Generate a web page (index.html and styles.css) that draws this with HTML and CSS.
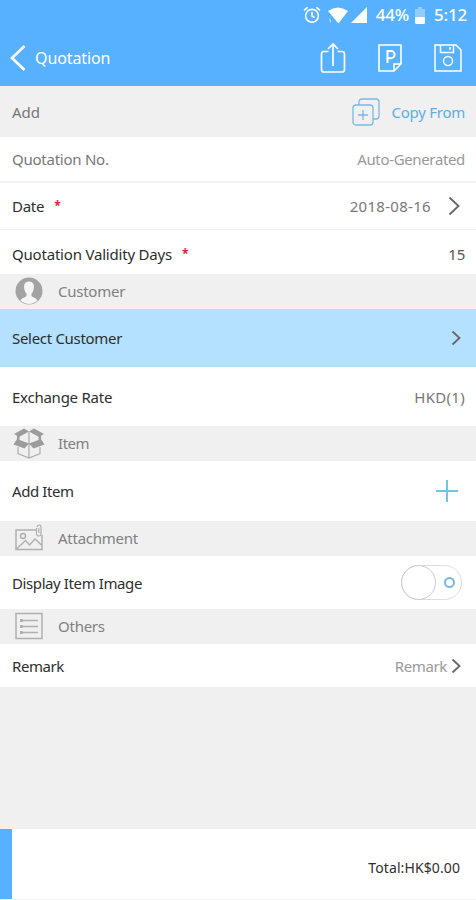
FILE: index.html
```html
<!DOCTYPE html>
<html lang="en">
<head>
    <meta charset="UTF-8">
    <meta name="viewport" content="width=device-width, initial-scale=1.0">
    <title>Quotation</title>
    <link rel="stylesheet" href="styles.css">
</head>
<body>
    <header class="header">
        <div class="status">
            <svg class="alarm" width="18" height="18" viewBox="0 0 18 18" fill="none" stroke="#fff" stroke-width="1.6">
                <circle cx="9" cy="9.8" r="6.4"/>
                <path d="M9 6v4l2.6 1.6M1 4.4L4.6 1.4M17 4.4L13.4 1.4"/>
            </svg>
            <svg class="wifi" width="20" height="17" viewBox="0 0 20 17" fill="#fff">
                <path d="M0 4Q10-3 20 4L10.400 16.500z"/>
                <path d="M1.400 11l2 2.500-1.400 2.500z" opacity=".6"/>
            </svg>
            <svg class="signal" width="16" height="16" viewBox="0 0 16 16" fill="#fff">
                <path d="M16 0v16H0z"/>
            </svg>
            <span class="percent">44%</span>
            <svg class="battery" width="10" height="17" viewBox="0 0 10 17" fill="#fff">
                <path d="M3 0h4v2h3v8H0V2h3z" opacity=".35"/>
                <path d="M0 10h10v5.500q0 1.500-1.500 1.500h-7Q0 17 0 15.500z"/>
            </svg>
            <span class="clock">5:12</span>
        </div>
        <nav class="navbar">
            <svg class="back" width="16" height="26" viewBox="0 0 16 26" fill="none" stroke="#fff" stroke-width="2.6">
                <path d="M14.500 1L2 13l12.500 12"/>
            </svg>
            <h1 class="title">Quotation</h1>
            <div class="tools">
                <svg width="26" height="32" viewBox="0 0 26 32" fill="none" stroke="#fff" stroke-width="1.7">
                    <path d="M8.500 9.500H4Q1.500 9.500 1.500 12v15.500Q1.500 30 4 30h18q2.500 0 2.500-2.500V12q0-2.500-2.500-2.500h-4.500M13 24V2M8 7l5-5 5 5"/>
                </svg>
                <svg width="24" height="28" viewBox="0 0 24 28" fill="none" stroke="#fff" stroke-width="1.6">
                    <path d="M1 1h22v19l-7 7H1zM23 20h-7v7"/>
                    <path d="M9.500 19V7h3.500a3.500 3.500 0 0 1 0 7.200H9.500" stroke-width="2"/>
                </svg>
                <svg width="28" height="28" viewBox="0 0 28 28" fill="none" stroke="#fff" stroke-width="1.5">
                    <path d="M1 1h21l5 5v21H1zM6.500 1v7.500h13V1M16 3v3"/>
                    <circle cx="14" cy="17" r="4.500"/>
                </svg>
            </div>
        </nav>
    </header>

    <main class="form">
        <div class="row row-add">
            <span class="add">Add</span>
            <a class="copy">
                <svg width="28" height="28" viewBox="0 0 28 28" fill="none" stroke="#79b9e2" stroke-width="1.3">
                    <rect x="1" y="7" width="20" height="20" rx="3"/>
                    <path d="M7 7V4q0-3 3-3h14q3 0 3 3v14q0 3-3 3h-3M11 12v10M6 17h10"/>
                </svg>
                <span class="copy-text">Copy From</span>
            </a>
        </div>
        <div class="row row-no">
            <span class="label-no">Quotation No.</span>
            <span class="auto">Auto-Generated</span>
        </div>
        <div class="row row-date">
            <span class="label-date">Date</span><span class="required">*</span>
            <span class="date">2018-08-16</span>
            <svg class="arrow arrow-date" width="12" height="20" viewBox="0 0 12 20"><path d="M1.500 1.500L10.500 10l-9 8.500"/></svg>
        </div>
        <div class="row row-days">
            <span class="label-days">Quotation Validity Days</span><span class="required">*</span>
            <span class="days">15</span>
        </div>

        <h2 class="section">
            <svg width="28" height="28" viewBox="0 0 28 28">
                <circle cx="14" cy="14" r="13.500" fill="#a3a3a3"/>
                <path d="M14 4.500c-4 0-5.300 3-4.800 6.500.3 3 1.300 4.500 2.300 5.500v2.500c-1.200 1.600-4.500 1.500-6 4.500 5 4.500 12 4.500 17 0-1.500-3-4.800-2.900-6-4.500v-2.500c1-1 2-2.500 2.300-5.500.5-3.500-.8-6.500-4.800-6.500z" fill="#f5f5f5"/>
            </svg>
            <span class="name-customer">Customer</span>
        </h2>
        <div class="row row-customer">
            <span class="label-customer">Select Customer</span>
            <svg class="arrow arrow-customer" width="10" height="16" viewBox="0 0 10 16"><path d="M1.500 1.500L8.500 8l-7 6.500"/></svg>
        </div>
        <div class="row row-rate">
            <span class="label-rate">Exchange Rate</span>
            <span class="rate">HKD(1)</span>
        </div>

        <h2 class="section">
            <svg class="box" width="32" height="32" viewBox="0 0 32 32">
                <path d="M5 20v6.500L16 31l11-4.500V20M16 5v26" fill="none" stroke="#b0b0b0" stroke-width="1.3"/>
                <g fill="#9c9c9c">
                    <path d="M11 1.500L16 4.500 6 10 1 7zM21 1.500L16 4.500 26 10 31 7z"/>
                    <path d="M4 12L16 16.500 11.500 21.500 0.500 17.500zM28 12L16 16.500 20.500 21.500 31.500 17.500z"/>
                    <path d="M4 9h2.500v4H4zM25.500 9H28v4h-2.500z"/>
                </g>
            </svg>
            <span class="name-item">Item</span>
        </h2>
        <div class="row row-item">
            <span class="label-item">Add Item</span>
            <svg class="plus" width="22" height="22" viewBox="0 0 22 22"><path d="M11 0v22M0 11h22" stroke="#74c3e3" stroke-width="2"/></svg>
        </div>

        <h2 class="section">
            <svg width="28" height="28" viewBox="0 0 28 28" fill="none" stroke="#b0b0b0" stroke-width="1.5">
                <path d="M21 6H1v19.500h26V11M2 24.500l8.500-8 4 4.500L20 15l6.500 6"/>
                <circle cx="8" cy="12" r="2.500"/>
                <path d="M21.500 4v5.500q0 2.500 2.300 2.500T26 9.500V3.500Q26 1 24.200 1T22 3M23.800 4v5" stroke-width="1.2"/>
            </svg>
            <span class="name-attachment">Attachment</span>
        </h2>
        <div class="row row-image">
            <span class="label-image">Display Item Image</span>
            <span class="switch"><span class="knob"></span><span class="off"></span></span>
        </div>

        <h2 class="section">
            <svg width="28" height="28" viewBox="0 0 28 28" fill="none" stroke="#b0b0b0" stroke-width="1.5">
                <path d="M1 1.500h26v25H1z"/>
                <path d="M8 8.500h15M8 14.500h15M8 20.500h15"/>
                <path d="M5 8.500h3M5 14.500h3M5 20.500h3" stroke-width="3"/>
            </svg>
            <span class="name-others">Others</span>
        </h2>
        <div class="row row-remark">
            <span class="label-remark">Remark</span>
            <span class="remark">Remark</span>
            <svg class="arrow arrow-remark" width="10" height="16" viewBox="0 0 10 16"><path d="M1.500 1.500L8.500 8l-7 6.500"/></svg>
        </div>
    </main>

    <footer class="footer">
        <span class="total">Total:HK$0.00</span>
    </footer>
</body>
</html>
```
FILE: styles.css
```css
* {
    box-sizing: border-box;
}
body {
    margin: 0;
    height: 900px;
    display: flex;
    flex-direction: column;
    overflow: hidden;
    background: #f0f0f0;
    color: #2e2e2e;
    font-family: "Noto Sans", sans-serif;
    font-size: 15px;
    line-height: 20px;
}
svg {
    display: block;
    flex: none;
}
span {
    white-space: nowrap;
}
.header {
    height: 86px;
    background: #58b1ff;
    color: #fff;
}
.status {
    display: flex;
    align-items: center;
    justify-content: flex-end;
    height: 30px;
    padding-right: 9px;
    font-size: 17px;
    font-weight: 500;
}
.wifi {
    margin-left: 7px;
}
.signal {
    margin-left: 3px;
}
.percent {
    margin-left: 9px;
    letter-spacing: -0.2px;
}
.battery {
    margin-left: 6px;
}
.clock {
    margin-left: 9px;
    letter-spacing: -0.2px;
}
.navbar {
    display: flex;
    align-items: center;
    height: 56px;
    padding: 0 14px 0 10px;
}
.title {
    margin: 0 0 0 9px;
    font-size: 16px;
    font-weight: 400;
    letter-spacing: -0.1px;
}
.tools {
    display: flex;
    align-items: center;
    gap: 32px;
    margin-left: auto;
}
.row {
    display: flex;
    align-items: center;
    padding: 0 11px 0 12px;
    background: #fff;
    letter-spacing: -0.25px;
}
.row-add {
    height: 51px;
    background: #f0f0f0;
    color: #777;
}
.add {
    letter-spacing: 0;
}
.copy {
    display: flex;
    align-items: center;
    gap: 11px;
    margin-left: auto;
    color: #5aaee4;
}
.row-no {
    height: 46px;
    border-bottom: 2px solid #f2f2f2;
    color: #777;
}
.auto,
.date,
.days,
.rate,
.remark,
.plus,
.switch,
.arrow-customer {
    margin-left: auto;
}
.auto,
.remark {
    color: #999;
    letter-spacing: -0.35px;
}
.row-date {
    height: 47px;
    border-bottom: 1px solid #f2f2f2;
}
.required {
    margin: -1px 0 0 10px;
    color: #e0203c;
    font-size: 12px;
    font-weight: 700;
}
.date,
.rate {
    color: #777;
    letter-spacing: 0.3px;
}
.row-days {
    height: 44px;
    padding-top: 4px;
}
.label-days {
    letter-spacing: -0.2px;
}
.days {
    color: #555;
}
.arrow {
    fill: none;
    stroke: #666;
    stroke-width: 1.8;
}
.arrow-date {
    margin: 0 5px 0 17px;
}
.arrow-customer,
.arrow-remark {
    margin-right: 4px;
}
.arrow-remark {
    margin-left: 4px;
}
.section {
    display: flex;
    align-items: center;
    gap: 15px;
    height: 35px;
    margin: 0;
    padding: 0 0 1px 15px;
    color: #808080;
    font-size: 15px;
    font-weight: 400;
    letter-spacing: -0.25px;
}
.box {
    margin: 0 -2px;
}
.row-customer {
    height: 58px;
    background: #b3e1ff;
}
.label-customer {
    letter-spacing: -0.3px;
}
.row-rate {
    height: 59px;
}
.row-item {
    height: 60px;
}
.label-item,
.label-image {
    letter-spacing: -0.4px;
}
.name-item,
.label-remark {
    letter-spacing: -0.45px;
}
.plus {
    margin-right: 7px;
}
.row-image {
    height: 53px;
}
.switch {
    display: flex;
    align-items: center;
    width: 61px;
    height: 35px;
    margin-right: 3px;
    border: 1px solid #ddd;
    border-radius: 18px;
}
.knob {
    width: 35px;
    height: 35px;
    margin-left: -1px;
    border: 1px solid #ccc;
    border-radius: 50%;
}
.off {
    width: 11px;
    height: 11px;
    margin-left: 8px;
    border: 2px solid #78b8e6;
    border-radius: 50%;
}
.row-remark {
    height: 43px;
}
.footer {
    display: flex;
    align-items: center;
    justify-content: flex-end;
    height: 70px;
    margin: auto 0 1px;
    padding: 7px 16px 0 0;
    border-left: 12px solid #58b1ff;
    background: #fff;
    font-size: 14px;
    letter-spacing: 0.1px;
}
```
